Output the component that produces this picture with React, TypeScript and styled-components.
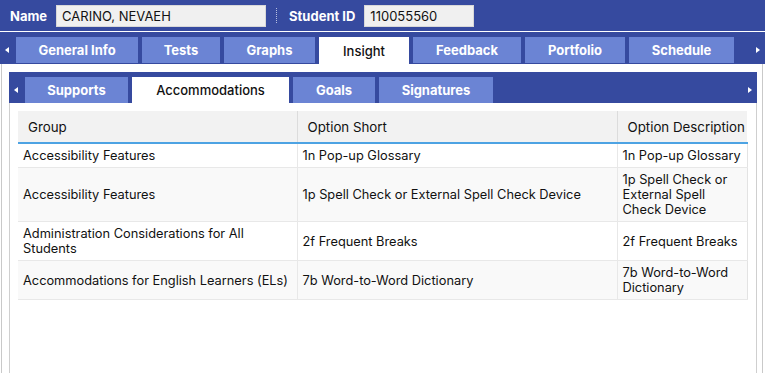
import React from 'react';
import styled, { createGlobalStyle } from 'styled-components';

const Global = createGlobalStyle`
  html, body { margin: 0; padding: 0; background: #fff; }
  body { font-family: Inter, "Open Sans", sans-serif; }
`;

const BLUE = '#364a9f';
const TAB_BLUE = '#6b84d4';

const Page = styled.div`
  width: 765px;
  height: 373px;
  overflow: hidden;
  display: flex;
  flex-direction: column;
`;

const TopBar = styled.div`
  height: 32px;
  box-sizing: border-box;
  padding: 5px 0 0 10px;
  background: ${BLUE};
  border-bottom: 1px solid #fff;
  display: flex;
  align-items: flex-start;
`;

const Label = styled.span`
  color: #fff;
  font-weight: 700;
  font-size: 13px;
  line-height: 22px;
  margin-right: 9px;
`;

const Field = styled.div<{ $w: number }>`
  width: ${(p) => p.$w}px;
  height: 22px;
  box-sizing: border-box;
  background: #f0f0f0;
  border: 1px solid #d8d8d8;
  font-size: 13px;
  line-height: 20px;
  color: #111;
  padding-left: 5px;
`;

const Separator = styled.div`
  width: 0;
  height: 15px;
  margin: 3px 12px 0 10px;
  border-left: 1px dotted #b8c0e0;
`;

const TabBar = styled.div<{ $h: number }>`
  height: ${(p) => p.$h}px;
  box-sizing: border-box;
  padding-top: 5px;
  background: ${BLUE};
  display: flex;
  align-items: flex-start;
`;

const Arrow = styled.div<{ $dir: 'left' | 'right' }>`
  width: 16px;
  height: 26px;
  box-sizing: border-box;
  padding: 0 5px;
  display: flex;
  align-items: center;
  justify-content: ${(p) => (p.$dir === 'left' ? 'flex-start' : 'flex-end')};
  &::before {
    content: '';
    border-top: 3.5px solid transparent;
    border-bottom: 3.5px solid transparent;
    ${(p) => (p.$dir === 'left' ? 'border-right: 4px solid #fff;' : 'border-left: 4px solid #fff;')}
  }
`;

const Tabs = styled.div`
  display: flex;
  gap: 4px;
  flex: 1;
`;

const Tab = styled.div<{ $w: number; $active?: boolean; $h: number }>`
  width: ${(p) => p.$w}px;
  height: ${(p) => p.$h}px;
  background: ${(p) => (p.$active ? '#fff' : TAB_BLUE)};
  color: ${(p) => (p.$active ? '#111' : '#fff')};
  font-weight: ${(p) => (p.$active ? 500 : 700)};
  font-size: 13px;
  display: flex;
  align-items: center;
  justify-content: center;
  flex: none;
`;

const Content = styled.div`
  flex: 1;
  margin: 0 2px 0 1px;
  border-left: 1px solid #c9c9c9;
  border-right: 1px solid #c9c9c9;
  padding: 8px 5px 0 7px;
  display: flex;
  flex-direction: column;
`;

const InnerPanel = styled.div`
  flex: 1;
  display: flex;
  flex-direction: column;
`;

const InnerBody = styled.div`
  flex: 1;
  border-left: 1px solid #cfcfcf;
  border-right: 1px solid #cfcfcf;
  padding: 8px 9px 0 8px;
`;

const Table = styled.table`
  width: 729px;
  border-collapse: collapse;
  table-layout: fixed;
`;

const Th = styled.th<{ $w: number }>`
  width: ${(p) => p.$w}px;
  height: 32px;
  box-sizing: border-box;
  background: #f2f2f2;
  text-align: left;
  font-weight: 400;
  font-size: 13.3px;
  color: #111;
  padding: 0 0 0 10px;
  border-bottom: 2px solid #4da3e3;
  & + & { border-left: 1px solid #dcdcdc; }
`;

const Tr = styled.tr`
  &:nth-child(even) { background: #f9f9f9; }
`;

const Td = styled.td`
  padding: 4px 5px 4px 5px;
  font-size: 12.8px;
  line-height: 15px;
  color: #111;
  vertical-align: middle;
  border-bottom: 1px solid #e8e8e8;
  & + & { border-left: 1px solid #e8e8e8; }
  &:last-child { border-right: 1px solid #e3e3e3; }
`;

const outerTabs = [
  { label: 'General Info', w: 122 },
  { label: 'Tests', w: 78 },
  { label: 'Graphs', w: 91 },
  { label: 'Insight', w: 90, active: true },
  { label: 'Feedback', w: 108 },
  { label: 'Portfolio', w: 100 },
  { label: 'Schedule', w: 105 },
];

const innerTabs = [
  { label: 'Supports', w: 103 },
  { label: 'Accommodations', w: 157, active: true },
  { label: 'Goals', w: 82 },
  { label: 'Signatures', w: 114 },
];

const rows = [
  ['Accessibility Features', '1n Pop-up Glossary', '1n Pop-up Glossary'],
  ['Accessibility Features', '1p Spell Check or External Spell Check Device', '1p Spell Check or External Spell Check Device'],
  ['Administration Considerations for All Students', '2f Frequent Breaks', '2f Frequent Breaks'],
  ['Accommodations for English Learners (ELs)', '7b Word-to-Word Dictionary', '7b Word-to-Word Dictionary'],
];

export default function App() {
  return (
    <Page>
      <Global />
      <TopBar>
        <Label>Name</Label>
        <Field $w={210}>CARINO, NEVAEH</Field>
        <Separator />
        <Label>Student ID</Label>
        <Field $w={110}>110055560</Field>
      </TopBar>
      <TabBar $h={32}>
        <Arrow $dir="left" />
        <Tabs>
          {outerTabs.map((t) => (
            <Tab key={t.label} $w={t.w} $active={t.active} $h={t.active ? 27 : 26}>
              {t.label}
            </Tab>
          ))}
        </Tabs>
        <Arrow $dir="right" />
      </TabBar>
      <Content>
        <InnerPanel>
          <TabBar $h={31}>
            <Arrow $dir="left" />
            <Tabs>
              {innerTabs.map((t) => (
                <Tab key={t.label} $w={t.w} $active={t.active} $h={26}>
                  {t.label}
                </Tab>
              ))}
            </Tabs>
            <Arrow $dir="right" />
          </TabBar>
          <InnerBody>
            <Table>
              <thead>
                <tr>
                  <Th $w={279}>Group</Th>
                  <Th $w={320}>Option Short</Th>
                  <Th $w={130}>Option Description</Th>
                </tr>
              </thead>
              <tbody>
                {rows.map((r, i) => (
                  <Tr key={i}>
                    {r.map((c, j) => (
                      <Td key={j}>{c}</Td>
                    ))}
                  </Tr>
                ))}
              </tbody>
            </Table>
          </InnerBody>
        </InnerPanel>
      </Content>
    </Page>
  );
}
